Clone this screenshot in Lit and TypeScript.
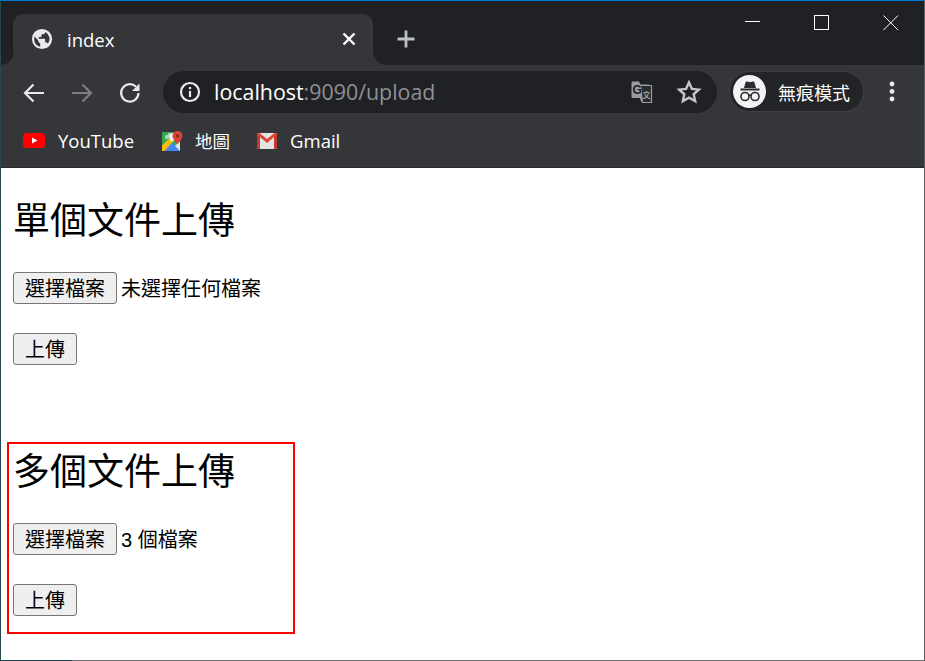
import { LitElement, html, css } from "lit";
import { customElement } from "lit/decorators.js";

@customElement("app-root")
export class AppRoot extends LitElement {
  static styles = css`
    :host { display: block; width: 925px; height: 661px; overflow: hidden; position: relative; background: #fff; }
    .win { height: 661px; display: flex; flex-direction: column; box-sizing: border-box; border-top: 1px solid #0078d7; border-left: 1px solid #24484f; border-right: 1px solid #5c6063; }
    .strip { height: 64px; flex: none; background: #202124; display: flex; padding: 13px 0 0 12px; box-sizing: border-box; position: relative; }
    .tab { width: 360px; height: 51px; background: #35363a; border-radius: 10px 10px 0 0; display: flex; align-items: center; padding: 0 17px 2px 18px; box-sizing: border-box; position: relative; color: #fff; font: 18.5px "Open Sans", "Noto Sans", sans-serif; gap: 14px; }
    .tab::before, .tab::after { content: ""; position: absolute; bottom: 0; width: 13px; height: 13px; }
    .tab::before { left: -12px; background: radial-gradient(circle at 0 0, #202124 12.5px, #35363a 13px); }
    .tab::after { right: -13px; background: radial-gradient(circle at 100% 0, #202124 12.5px, #35363a 13px); }
    .tab .t { flex: 1; padding-top: 2px; }
    .plus { margin: 15px 0 0 23px; width: 20px; height: 20px; }
    .ctrls { margin-left: auto; display: flex; height: 20px; margin-top: 1px; margin-right: 25px; gap: 53px; }
    .bar { height: 55px; flex: none; background: #35363a; display: flex; align-items: center; padding-left: 21px; box-sizing: border-box; }
    .nav { display: flex; gap: 24px; width: 141px; flex: none; }
    .omni { width: 554px; height: 42px; flex: none; background: #202124; border-radius: 21px; display: flex; align-items: center; padding: 0 15px 0 16px; box-sizing: border-box; margin-top: -1px; font: 21.4px "Open Sans", "Noto Sans", sans-serif; color: #fff; }
    .url { margin-left: 13px; flex: 1; padding-bottom: 2px; }
    .url span { color: #8e9094; }
    .omni-r { display: flex; gap: 23px; align-items: center; }
    .pill { margin-left: 12px; width: 135px; height: 41px; flex: none; border: 1px solid #3f4044; border-radius: 21px; box-sizing: border-box; display: flex; align-items: center; padding-left: 3px; color: #fff; font: 18px "Noto Sans CJK TC", sans-serif; gap: 12px; margin-top: -2px; background: #232428; }
    .av { width: 33px; height: 33px; border-radius: 50%; background: #f1f3f4; flex: none; display: flex; align-items: center; justify-content: center; }
    .dots { margin-left: 24px; width: 8px; height: 24px; flex: none; }
    .marks { height: 48px; flex: none; background: #35363a; display: flex; align-items: center; padding: 0 0 6px 22px; box-sizing: border-box; border-bottom: 1px solid #27282b; color: #fff; font: 18.5px "Open Sans", "Noto Sans", "Noto Sans CJK TC", sans-serif; }
    .mark { display: flex; align-items: center; gap: 13px; }
    .mark svg { display: block; }
    .yt { margin-right: 27px; }
    .mp { margin-right: 27px; gap: 12px; }
    .mp span { font-size: 17.5px; }
    .page { flex: 1; background: #fff; padding: 34px 12px 0; box-sizing: border-box; color: #000; font: 20px "Liberation Sans", "Noto Sans CJK TC", sans-serif; }
    h1 { margin: 0; font: 400 37px/40px "Liberation Serif", "Noto Sans CJK TC", serif; height: 40px; white-space: nowrap; }
    .row { display: flex; align-items: center; gap: 4px; height: 32px; margin-top: 30px; white-space: nowrap; }
    .row.up { margin-top: 29px; }
    .row span { padding-bottom: 2px; }
    button { font: 20px "Liberation Sans", "Noto Sans CJK TC", sans-serif; height: 32px; padding: 0 11px 2px; background: #efefef; border: 1px solid #767676; border-radius: 3px; color: #000; box-sizing: border-box; }
    .section2 { margin-top: 88px; }
    .edge { height: 1px; flex: none; margin-top: auto; background: linear-gradient(to right, #1f4357 71px, #6f6f6f 71px); }
    .mark-box { position: absolute; left: 7px; top: 442px; width: 288px; height: 192px; box-sizing: border-box; border: 2px solid #f00; pointer-events: none; }
  `;

  render() {
    return html`<div class="win">
      <div class="strip">
        <div class="tab">
          <svg width="22" height="22" viewBox="0 0 24 24"><path fill="#e8eaed" d="M12 1a11 11 0 1 0 0 22 11 11 0 0 0 0-22zM3.500 12c0-.9.2-1.800.4-2.600L8 13.500v1c0 1.100.9 2 2 2v3.900A8.500 8.500 0 0 1 3.500 12zm14.900 5.100c-.3-.8-1-1.400-1.900-1.400h-1v-3c0-.5-.4-1-1-1H8.500v-2h2c.5 0 1-.4 1-1v-2h2c1.100 0 2-.9 2-2v-.4a8.500 8.500 0 0 1 2.900 12.800z"/></svg>
          <span class="t">index</span>
          <svg width="14" height="14" viewBox="0 0 14 14"><path d="M1.500 1.500l11 11M12.500 1.500l-11 11" stroke="#fff" stroke-width="2.400"/></svg>
        </div>
        <svg class="plus" viewBox="0 0 20 20"><path d="M10 1.500v17M1.500 10h17" stroke="#bdc1c6" stroke-width="2.800"/></svg>
        <div class="ctrls">
          <svg width="16" height="16" viewBox="0 0 16 16"><path d="M0 6.500h15" stroke="#fff"/></svg>
          <svg width="16" height="16" viewBox="0 0 16 16"><rect x=".5" y=".5" width="14" height="14" fill="none" stroke="#fff"/></svg>
          <svg width="16" height="16" viewBox="0 0 16 16"><path d="M.5.5l14.500 14.500M15 .5L.5 15" stroke="#fff"/></svg>
        </div>
      </div>
      <div class="bar">
        <div class="nav">
          <svg width="24" height="24" viewBox="0 0 24 24"><path d="M22 12H3M11.500 3.500L3 12l8.500 8.500" fill="none" stroke="#e8eaed" stroke-width="2.200"/></svg>
          <svg width="24" height="24" viewBox="0 0 24 24"><path d="M2 12h19M12.500 3.500L21 12l-8.500 8.500" fill="none" stroke="#7c7e82" stroke-width="2.200"/></svg>
          <svg width="24" height="24" viewBox="0 0 24 24"><path d="M20.500 12a8.700 8.700 0 1 1-2.500-6.200" fill="none" stroke="#e8eaed" stroke-width="2.200"/><path d="M21.500 2.500v7.500H14z" fill="#e8eaed"/></svg>
        </div>
        <div class="omni">
          <svg width="22" height="22" viewBox="0 0 22 22"><circle cx="11" cy="11" r="9" fill="none" stroke="#e8eaed" stroke-width="2.200"/><path d="M11 10v6M11 6v2.200" stroke="#e8eaed" stroke-width="2.200"/></svg>
          <div class="url">localhost<span>:9090/upload</span></div>
          <div class="omni-r">
            <svg width="24" height="24" viewBox="0 0 24 24"><path d="M2.500 2.500a1 1 0 0 1 1-1H10l1.500 3H20v17h-8l-1-3.500H3.500a1 1 0 0 1-1-1z" fill="#9a9c9f"/><path d="M11.500 5.500h11v17h-9z" fill="#2b2c30" stroke="#9a9c9f" stroke-width="1.200"/><text x="3.500" y="14" font-family="Liberation Sans" font-weight="700" font-size="12" fill="#202124">G</text><text x="13.500" y="18" font-family="Noto Sans CJK TC" font-size="8" fill="#c8cacc">文</text></svg>
            <svg width="26" height="26" viewBox="0 0 24 24"><path d="M12 3.200l2.700 5.900 6.400.7-4.800 4.300 1.400 6.300L12 17.200l-5.700 3.200 1.400-6.300-4.800-4.300 6.400-.7z" fill="none" stroke="#c4c7c5" stroke-width="2.200"/></svg>
          </div>
        </div>
        <div class="pill">
          <div class="av">
            <svg width="28" height="24" viewBox="0 0 28 24"><path d="M9.500 2.500Q10 1 11.500 1.500L14 2.300l2.500-.8Q18 1 18.500 2.500L20 8H8z" fill="#2b2c2f"/><path d="M4.500 9.500h19" stroke="#2b2c2f" stroke-width="2"/><circle cx="9" cy="16.500" r="4" fill="none" stroke="#2b2c2f" stroke-width="1.600"/><circle cx="19" cy="16.500" r="4" fill="none" stroke="#2b2c2f" stroke-width="1.600"/><path d="M12.500 15.500q1.500-1 3 0" fill="none" stroke="#2b2c2f" stroke-width="1.400"/></svg>
          </div>
          <span>無痕模式</span>
        </div>
        <svg class="dots" viewBox="0 0 8 24"><circle cx="4" cy="3" r="2.400" fill="#e8eaed"/><circle cx="4" cy="10.500" r="2.400" fill="#e8eaed"/><circle cx="4" cy="18" r="2.400" fill="#e8eaed"/></svg>
      </div>
      <div class="marks">
        <div class="mark yt">
          <svg width="22" height="15" viewBox="0 0 22 15"><rect width="22" height="15" rx="3.500" fill="#f00"/><path d="M9 4.500l5.500 3-5.500 3z" fill="#fff"/></svg>
          <span>YouTube</span>
        </div>
        <div class="mark mp">
          <svg width="22" height="22" viewBox="0 0 22 22"><path d="M1 2h18v19H1z" fill="#34a853"/><path d="M1 21V18L9 10l10 11z" fill="#4285f4"/><path d="M19 21l-5-5 5-5z" fill="#e4e4e4"/><path d="M1 15.500L14 3h3.500v2.500L3.500 21H1z" fill="#fbbc04"/><path d="M7 3.500L14 3 17.500 5.500 11 11.800 9 10z" fill="#f2f2f2" opacity=".95"/><circle cx="6" cy="7" r="2.200" fill="#a8d8b0"/><path d="M16.500 1a5 5 0 0 0-5 5c0 3.500 5 8 5 8s5-4.500 5-8a5 5 0 0 0-5-5z" fill="#db4437"/><circle cx="16.500" cy="6" r="1.700" fill="#8c2a21"/></svg>
          <span>地圖</span>
        </div>
        <div class="mark gm">
          <svg width="20" height="16" viewBox="0 0 20 16"><rect width="20" height="16" rx="1" fill="#e4e4e4"/><path d="M0 1h3v15H1a1 1 0 0 1-1-1zM17 16V1h3v14a1 1 0 0 1-1 1z" fill="#c5392f"/><path d="M0 1.500V0h2.500L10 6 17.500 0H20v1.500L10 10z" fill="#db4437"/></svg>
          <span>Gmail</span>
        </div>
      </div>
      <div class="page">
        <h1>單個文件上傳</h1>
        <div class="row"><button>選擇檔案</button><span>未選擇任何檔案</span></div>
        <div class="row up"><button>上傳</button></div>
        <div class="section2">
          <h1>多個文件上傳</h1>
          <div class="row"><button>選擇檔案</button><span>3 個檔案</span></div>
          <div class="row up"><button>上傳</button></div>
        </div>
      </div>
      <div class="edge"></div>
    </div>
    <div class="mark-box"></div>`;
  }
}
